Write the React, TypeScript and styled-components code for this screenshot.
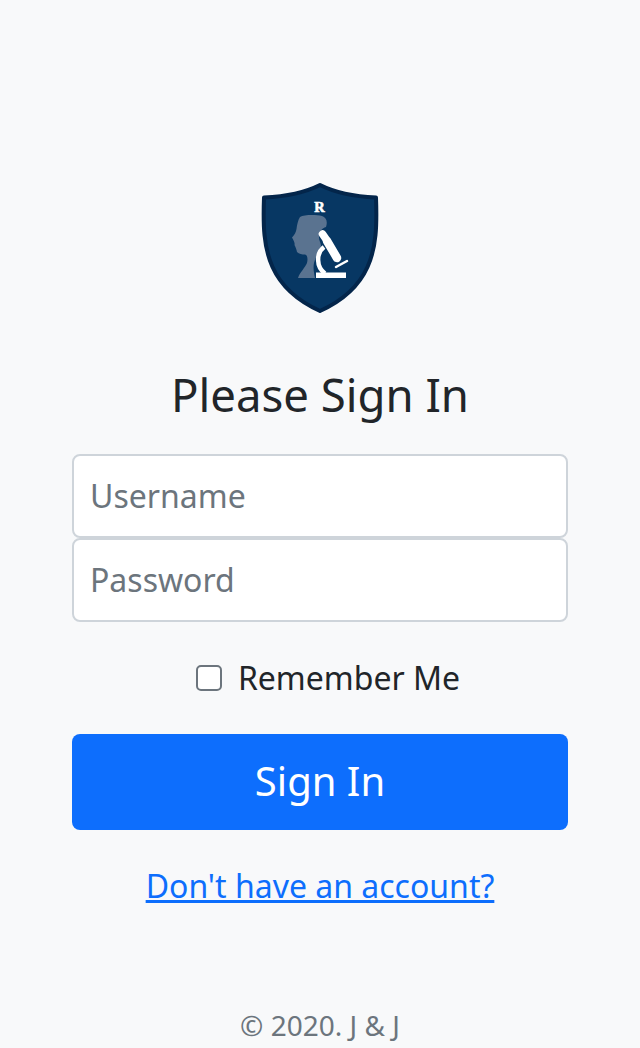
import React from "react";
import styled, { createGlobalStyle } from "styled-components";

const GlobalStyle = createGlobalStyle`
  html, body {
    margin: 0;
    padding: 0;
    background: #f8f9fa;
  }
  * {
    box-sizing: border-box;
  }
`;

const Page = styled.main`
  height: 1048px;
  padding: 175px 72px 0;
  display: flex;
  flex-direction: column;
  align-items: center;
  font-family: "Noto Sans", sans-serif;
  color: #212529;
  overflow: hidden;
`;

const Logo = styled.svg`
  display: block;
  width: 140px;
  height: 145px;
  margin-bottom: 48px;
`;

const Title = styled.h1`
  margin: 0 0 33px;
  font-size: 45.5px;
  line-height: 53px;
  font-weight: 400;
`;

const Form = styled.form`
  width: 100%;
  display: flex;
  flex-direction: column;
  align-items: center;
`;

const Field = styled.input`
  display: block;
  width: 100%;
  height: 84px;
  padding: 0 16px 1px;
  background: #fff;
  border: 2px solid #ced4da;
  border-radius: 8px;
  font-family: inherit;
  font-size: 32px;
  color: #212529;
  outline: none;

  &::placeholder {
    color: #6c757d;
    opacity: 1;
  }
`;

const RememberRow = styled.label`
  display: flex;
  align-items: center;
  gap: 16px;
  margin-top: 32px;
  padding-left: 16px;
  font-size: 32px;
  line-height: 48px;
`;

const Check = styled.input`
  appearance: none;
  display: block;
  width: 26px;
  height: 26px;
  margin: 0;
  background: #fff;
  border: 2px solid #6c757d;
  border-radius: 5px;
`;

const SubmitButton = styled.button`
  width: 100%;
  height: 96px;
  margin-top: 32px;
  padding: 0 0 3px;
  background: #0d6efd;
  border: none;
  border-radius: 8px;
  color: #fff;
  font-family: inherit;
  font-size: 40px;
`;

const SignUpLink = styled.a`
  margin-top: 32px;
  font-size: 32px;
  line-height: 48px;
  color: #0d6efd;
  text-decoration: underline;
`;

const Footer = styled.footer`
  margin-top: 94px;
  font-size: 28px;
  line-height: 42px;
  color: #6c757d;
`;

const ShieldLogo = () => (
  <Logo viewBox="0 0 140 145" aria-label="Logo">
    <path
      d="M70 10C55 17.500 35 21.500 14 22.500C13 50 13.500 72 22.500 92C31.500 112 49 126.500 70 136C91 126.500 108.500 112 117.500 92C126.500 72 127 50 126 22.500C105 21.500 85 17.500 70 10Z"
      fill="#073763"
      stroke="#03254a"
      strokeWidth="4"
      strokeLinejoin="round"
    />
    <path
      d="M50 42C54 39.500 66 39.500 72 41C76 42.500 78 46 76 52C72 53 70 56 69 61C68.500 65 71 68 71 71C69 75 66 81 64 88C63 93 64 98 65 103H48C50 97 55 93 57 88C58 84 57.500 80 55 79.500C52 79.500 49 79 47 77C46.500 74 45.500 72 44.500 70C45 68 44 66 42 62.500C44.500 60 46 57 46.500 54C47 50 48 45 50 42Z"
      fill="#5a7390"
    />
    <g fill="none" stroke="#fff">
      <path d="M72.500 59L77 65.500" strokeWidth="7.500" strokeLinecap="round" />
      <path d="M77 66L87 83" strokeWidth="8.500" strokeLinecap="round" />
      <path d="M74 72C66 78 66 92 75 98.500" strokeWidth="4.500" />
      <path d="M86 92L97 86" strokeWidth="2.500" strokeLinecap="round" />
    </g>
    <rect x="66" y="97.500" width="30" height="5.500" fill="#fff" />
    <text
      x="69.500"
      y="37"
      fontFamily="'Liberation Serif', serif"
      fontSize="14.500"
      fontWeight="700"
      textAnchor="middle"
      fill="#fff"
      stroke="#fff"
      strokeWidth="0.600"
    >
      R
    </text>
  </Logo>
);

export default function App() {
  return (
    <>
      <GlobalStyle />
      <Page>
        <ShieldLogo />
        <Title>Please Sign In</Title>
        <Form onSubmit={(e) => e.preventDefault()}>
          <Field type="text" placeholder="Username" />
          <Field type="password" placeholder="Password" />
          <RememberRow>
            <Check type="checkbox" />
            Remember Me
          </RememberRow>
          <SubmitButton type="submit">Sign In</SubmitButton>
          <SignUpLink href="#">Don't have an account?</SignUpLink>
        </Form>
        <Footer>© 2020. J &amp; J</Footer>
      </Page>
    </>
  );
}
